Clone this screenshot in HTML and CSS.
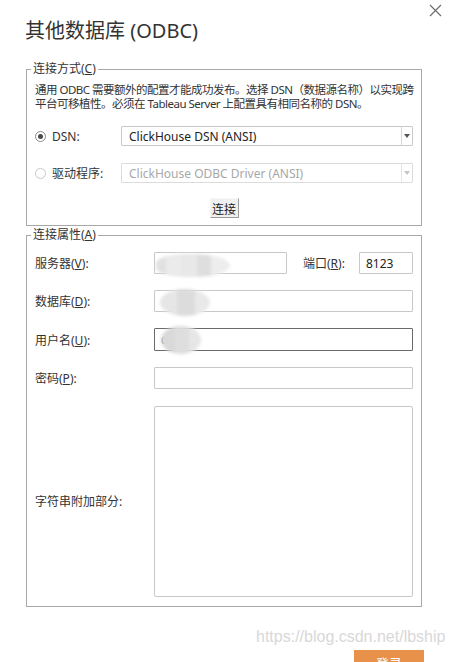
FILE: index.html
```html
<!DOCTYPE html>
<html lang="zh-CN">
<head>
<meta charset="utf-8">
<title>其他数据库 (ODBC)</title>
<link rel="stylesheet" href="styles.css">
</head>
<body>
<div class="dialog">
  <div class="header">
    <h1 class="title">其他数据库 (ODBC)</h1>
    <button class="close" aria-label="关闭">
      <svg width="13" height="13" viewBox="0 0 13 13"><path d="M1 1L12 12M12 1L1 12" stroke="#6e6e6e" stroke-width="1.2" fill="none"/></svg>
    </button>
  </div>

  <fieldset class="group g1">
    <legend>连接方式(<u>C</u>)</legend>
    <p class="desc"><span class="desc-line">通用 ODBC 需要额外的配置才能成功发布。选择 DSN（数据源名称）以实现跨</span><span class="desc-line">平台可移植性。必须在 Tableau Server 上配置具有相同名称的 DSN。</span></p>
    <div class="opt-row first">
      <label class="radio"><span class="dot on"></span>DSN:</label>
      <div class="select">
        <span class="sel-text">ClickHouse DSN (ANSI)</span>
        <span class="sel-btn"><span class="tri"></span></span>
      </div>
    </div>
    <div class="opt-row second">
      <label class="radio"><span class="dot off"></span>驱动程序:</label>
      <div class="select disabled">
        <span class="sel-text">ClickHouse ODBC Driver (ANSI)</span>
        <span class="sel-btn"><span class="tri"></span></span>
      </div>
    </div>
    <div class="btn-row"><button class="btn">连接</button></div>
  </fieldset>

  <fieldset class="group g2">
    <legend>连接属性(<u>A</u>)</legend>
    <div class="form">
      <label class="lbl">服务器(<u>V</u>):</label>
      <div class="server-line">
        <div class="input blurred"><span class="blob b1"></span></div>
        <label class="lbl port-lbl">端口(<u>R</u>):</label>
        <div class="input port">8123</div>
      </div>

      <label class="lbl">数据库(<u>D</u>):</label>
      <div class="input blurred"><span class="blob b2"></span></div>

      <label class="lbl">用户名(<u>U</u>):</label>
      <div class="input focused blurred"><span class="caret-char">c</span><span class="blob b3"></span></div>

      <label class="lbl">密码(<u>P</u>):</label>
      <div class="input"></div>

      <label class="lbl lbl-area">字符串附加部分:</label>
      <div class="textarea"></div>
    </div>
  </fieldset>

  <div class="footer">
    <span class="watermark">https://blog.csdn.net/lbship</span>
    <button class="login">登录</button>
  </div>
</div>
</body>
</html>
```

FILE: styles.css
```css
html, body {
  margin: 0;
  padding: 0;
  background: #ffffff;
}
body {
  font-family: "Noto Sans", "Noto Sans CJK SC", sans-serif;
  font-size: 12px;
  color: #333333;
  width: 453px;
  height: 662px;
  overflow: hidden;
}
.dialog {
  position: relative;
  width: 453px;
  height: 662px;
  overflow: hidden;
}
.header {
  height: 42px;
  padding-top: 19px;
  padding-left: 25px;
  box-sizing: border-box;
}
.title {
  margin: 0;
  font-family: "Noto Sans", "Noto Sans CJK SC", sans-serif;
  font-weight: normal;
  font-size: 20px;
  line-height: 24px;
  color: #333333;
}
.close {
  position: absolute;
  top: 4px;
  right: 11px;
  width: 13px;
  height: 13px;
  padding: 0;
  border: 0;
  background: transparent;
  display: flex;
}
.group {
  margin: 0 0 0 26px;
  width: 396px;
  box-sizing: border-box;
  border: 1px solid #a8a8a8;
  padding: 0 8px;
  min-width: 0;
}
.group legend {
  font-size: 12px;
  line-height: 14px;
  padding: 0 2px;
  margin-left: -4px;
  color: #333;
}
.g1 {
  margin-top: 20px;
  padding-bottom: 7px;
}
.desc {
  margin: 7px 0 0 0;
  font-size: 11.5px;
  color: #333;
  white-space: nowrap;
  letter-spacing: -0.5px;
}
.desc-line {
  display: block;
  height: 14px;
  line-height: 14px;
}
.opt-row {
  display: flex;
  align-items: center;
  height: 20px;
}
.opt-row.first { margin-top: 15px; }
.opt-row.second { margin-top: 17px; }
.radio {
  width: 86px;
  display: flex;
  align-items: center;
  gap: 6px;
  color: #333;
}
.dot {
  width: 11px;
  height: 11px;
  box-sizing: border-box;
  border-radius: 50%;
  border: 1px solid #8a8a8a;
  display: flex;
  align-items: center;
  justify-content: center;
}
.dot.on::after {
  content: "";
  width: 5px;
  height: 5px;
  border-radius: 50%;
  background: #4a4a4a;
}
.dot.off { border-color: #c8c8c8; }
.select {
  flex: 1;
  height: 20px;
  box-sizing: border-box;
  border: 1px solid #c8c8c8;
  border-radius: 1px;
  display: flex;
  align-items: center;
  color: #222;
}
.sel-text {
  flex: 1;
  padding-left: 7px;
}
.sel-btn {
  width: 10px;
  height: 18px;
  border-left: 1px solid #dadada;
  display: flex;
  align-items: center;
  justify-content: center;
}
.tri {
  width: 0;
  height: 0;
  border-left: 3.5px solid transparent;
  border-right: 3.5px solid transparent;
  border-top: 4px solid #555;
}
.select.disabled {
  border-color: #dcdcdc;
  color: #a8a8a8;
}
.select.disabled .sel-btn { border-left-color: #e6e6e6; }
.select.disabled .tri { border-top-color: #c4c4c4; }
.btn-row {
  display: flex;
  justify-content: center;
  margin-top: 15px;
}
.btn {
  width: 29px;
  height: 20px;
  padding: 0;
  font-family: "Noto Sans CJK SC", sans-serif;
  font-size: 12px;
  color: #222;
  background: #f0f0f0;
  border-top: 1px solid #f6f6f6;
  border-left: 1px solid #f6f6f6;
  border-right: 1px solid #9a9a9a;
  border-bottom: 1px solid #9a9a9a;
  border-radius: 0;
}
.g2 {
  margin-top: 2px;
  padding-bottom: 9px;
}
.form {
  display: grid;
  grid-template-columns: 119px 259px;
  row-gap: 16px;
  align-items: center;
  margin-top: 10px;
}
.lbl {
  color: #333;
  white-space: nowrap;
}
.server-line {
  display: flex;
  align-items: center;
}
.input {
  position: relative;
  height: 22px;
  box-sizing: border-box;
  border: 1px solid #c8c8c8;
  border-radius: 1px;
  display: flex;
  align-items: center;
  padding-left: 6px;
  color: #222;
}
.server-line .input.blurred {
  width: 133px;
}
.port-lbl {
  width: 56px;
  margin-left: 16px;
}
.input.port {
  width: 54px;
  padding-left: 6px;
}
.input.focused {
  border-color: #6a6a6a;
  height: 23px;
}
.caret-char {
  color: #222;
  font-size: 12px;
}
.blob {
  position: absolute;
  filter: blur(1.5px);
}
.b1 {
  left: 1px;
  top: 1px;
  width: 74px;
  height: 23px;
  background:
    linear-gradient(90deg, #e1e1e1 0 14%, #ebebeb 14% 34%, #e8e8e8 34% 55%, #dedede 55% 75%, #ededed 75% 100%);
  border-radius: 40% 50% 50% 40%;
}
.b2 {
  left: 5px;
  top: -2px;
  width: 50px;
  height: 27px;
  background:
    linear-gradient(90deg, #e6e6e6 0 35%, #dcdcdc 35% 70%, #e9e9e9 70% 100%);
  border-radius: 50%;
}
.b3 {
  left: 6px;
  top: -3px;
  width: 40px;
  height: 28px;
  background:
    linear-gradient(90deg, #d9d9d9 0 35%, #dedede 35% 70%, #e6e6e6 70% 100%);
  border-radius: 50%;
}
.textarea {
  height: 191px;
  box-sizing: border-box;
  border: 1px solid #c8c8c8;
  border-radius: 2px;
  margin-top: 1px;
}
.footer {
  position: relative;
  height: 55px;
}
.watermark {
  position: absolute;
  left: 256px;
  top: 21px;
  font-family: "Liberation Sans", sans-serif;
  font-size: 16px;
  color: #d8d8d8;
  white-space: nowrap;
}
.login {
  position: absolute;
  left: 354px;
  top: 43px;
  width: 70px;
  height: 26px;
  border: 0;
  padding: 0;
  background: #e8914a;
  color: #ffffff;
  font-family: "Noto Sans CJK SC", sans-serif;
  font-size: 13px;
  line-height: 26px;
}
```
